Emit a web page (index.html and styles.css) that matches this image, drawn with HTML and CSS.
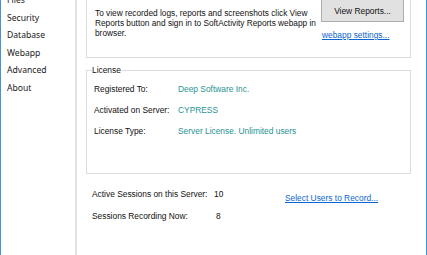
FILE: index.html
```html
<!DOCTYPE html>
<html>
<head>
<meta charset="utf-8">
<link rel="stylesheet" href="styles.css">
</head>
<body>
<div class="window">
  <ul class="nav">
    <li>Files</li>
    <li>Security</li>
    <li>Database</li>
    <li>Webapp</li>
    <li>Advanced</li>
    <li>About</li>
  </ul>
  <div class="main">
    <div class="box reports">
      <p class="intro">To view recorded logs, reports and screenshots click View Reports button and sign in to SoftActivity Reports webapp in browser.</p>
      <div class="actions">
        <button class="btn">View Reports...</button>
        <a class="link settings">webapp settings...</a>
      </div>
    </div>
    <fieldset class="license">
      <legend>License</legend>
      <div class="grid">
        <span>Registered To:</span><span class="val">Deep Software Inc.</span>
        <span>Activated on Server:</span><span class="val">CYPRESS</span>
        <span>License Type:</span><span class="val">Server License. Unlimited users</span>
      </div>
    </fieldset>
    <div class="sessions">
      <span>Active Sessions on this Server:</span><span>10</span><a class="link select">Select Users to Record...</a>
      <span>Sessions Recording Now:</span><span class="shift">8</span><span></span>
    </div>
  </div>
</div>
</body>
</html>
```
FILE: styles.css
```css
html, body {
  margin: 0;
  padding: 0;
  background: #fff;
}
body {
  width: 427px;
  height: 255px;
  overflow: hidden;
  font-family: "Liberation Sans", Arial, sans-serif;
  font-size: 8.4px;
  line-height: 10px;
  color: #111;
}
.window {
  display: flex;
  box-sizing: border-box;
  width: 427px;
  height: 255px;
  border-left: 1px solid #3f93df;
  border-right: 1px solid #3f93df;
  overflow: hidden;
}
.nav {
  list-style: none;
  margin: -8px 0 0 0;
  padding: 0 0 0 6px;
  width: 68px;
  flex: none;
  border-right: 2px solid #e2e2e2;
  font-family: "Noto Sans", "Open Sans", sans-serif;
  font-size: 8.6px;
  line-height: 17.5px;
  color: #1a1a1a;
  height: 280px;
}
.main {
  flex: 1;
  min-width: 0;
}
.box {
  border: 1px solid #dcdcdc;
}
.reports {
  margin: -20px 15px 0 9px;
  height: 76px;
  display: flex;
  padding: 0 6px 0 8px;
}
.intro {
  margin: 26.5px 0 0 0;
  width: 226px;
  flex: none;
  font-size: 8.3px;
  line-height: 10.3px;
}
.actions {
  margin-left: auto;
  display: flex;
  flex-direction: column;
  align-items: flex-start;
}
.btn {
  margin-top: 9px;
  width: 83px;
  height: 32px;
  padding: 10px 0 0 0;
  box-sizing: border-box;
  background: #e1e1e1;
  border: 1px solid #adadad;
  font-family: "Liberation Sans", Arial, sans-serif;
  font-size: 8.4px;
  line-height: 10px;
  color: #111;
  text-align: center;
}
.link {
  color: #0b66d0;
  text-decoration: underline;
}
.settings {
  margin: 8px 0 0 1px;
}
.license {
  margin: 7px 15px 0 9px;
  padding: 0 0 37px 5px;
  border: 1px solid #dcdcdc;
  min-width: 0;
}
.license legend {
  padding: 0 1px 0 0;
  margin: 0;
  line-height: 10px;
}
.grid {
  display: grid;
  grid-template-columns: 84px auto;
  row-gap: 11px;
  margin: 9px 0 0 2px;
}
.val {
  color: #1f9393;
}
.sessions {
  display: grid;
  grid-template-columns: 122px 71px auto;
  row-gap: 8px;
  margin: 15px 0 0 15px;
}
.select {
  margin-top: 4px;
}
.shift {
  padding-left: 2px;
}
```
